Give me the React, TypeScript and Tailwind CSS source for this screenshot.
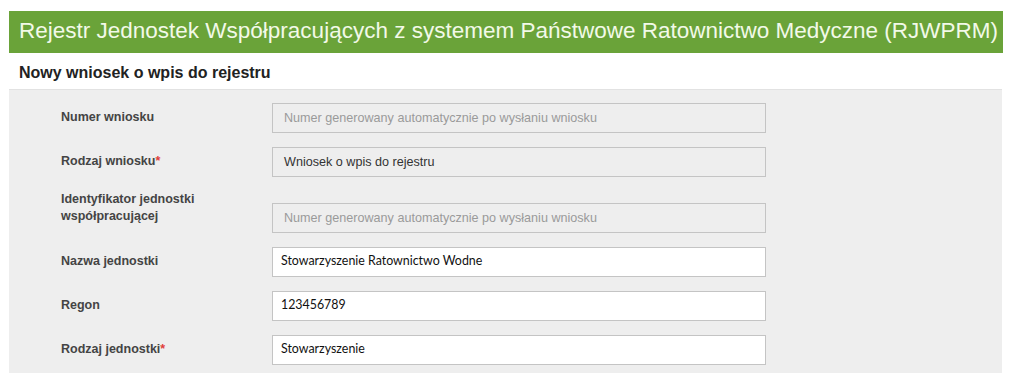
const arial = { fontFamily: '"Liberation Sans", Arial, sans-serif' }

type Row = {
  label: string[]
  required?: boolean
  value: string
  kind: 'auto' | 'readonly' | 'text'
}

const rows: Row[] = [
  { label: ['Numer wniosku'], value: 'Numer generowany automatycznie po wysłaniu wniosku', kind: 'auto' },
  { label: ['Rodzaj wniosku'], required: true, value: 'Wniosek o wpis do rejestru', kind: 'readonly' },
  {
    label: ['Identyfikator jednostki', 'współpracującej'],
    value: 'Numer generowany automatycznie po wysłaniu wniosku',
    kind: 'auto',
  },
  { label: ['Nazwa jednostki'], value: 'Stowarzyszenie Ratownictwo Wodne', kind: 'text' },
  { label: ['Regon'], value: '123456789', kind: 'text' },
  { label: ['Rodzaj jednostki'], required: true, value: 'Stowarzyszenie', kind: 'text' },
]

function Field({ row }: { row: Row }) {
  const multi = row.label.length > 1
  return (
    <div className={`flex ${multi ? 'items-end' : 'items-center'}`}>
      <div
        className={`w-[263px] shrink-0 pl-[52px] text-[12.5px] font-bold leading-[17px] text-[#444] ${multi ? 'mb-[8px]' : '-mt-[2px]'}`}
        style={arial}
      >
        {row.label.map((l, i) => (
          <div key={i}>
            {l}
            {row.required && i === row.label.length - 1 && <span className="text-[#e0403a]">*</span>}
          </div>
        ))}
      </div>
      {row.kind === 'text' ? (
        <div
          className="flex h-[30px] w-[494px] items-center border border-[#c4c4c4] bg-white pl-[8px] pb-[2px] text-[12.4px] text-[#111]"
          style={{ fontFamily: 'Lato, "Open Sans", sans-serif' }}
        >
          {row.value}
        </div>
      ) : (
        <div
          className={`flex h-[30px] w-[494px] items-center border border-[#c4c4c4] bg-[#eeeeee] pl-[11px] text-[12.6px] ${row.kind === 'auto' ? 'text-[#9a9a9a]' : 'text-[#333]'}`}
          style={arial}
        >
          {row.value}
        </div>
      )}
    </div>
  )
}

export default function App() {
  return (
    <div className="h-[389px] w-[1024px] bg-white pt-[11px] pl-[9px]">
      <div className="flex h-[42px] w-[994px] items-center bg-[#6aa339] pl-[10px] pb-[1px]">
        <h1 className="text-[22.5px] leading-none whitespace-nowrap text-[#f2f9e8]" style={arial}>
          Rejestr Jednostek Współpracujących z systemem Państwowe Ratownictwo Medyczne (RJWPRM)
        </h1>
      </div>
      <h2 className="mt-[11px] pl-[10px] text-[16px] leading-[18px] font-bold text-[#222]" style={arial}>
        Nowy wniosek o wpis do rejestru
      </h2>
      <div className="mt-[7px] flex w-[993px] flex-col gap-[14px] border-t border-[#e2e2e2] bg-[#eeeeee] pt-[13px] pb-[8px]">
        {rows.map((r, i) => (
          <Field key={i} row={r} />
        ))}
      </div>
    </div>
  )
}
